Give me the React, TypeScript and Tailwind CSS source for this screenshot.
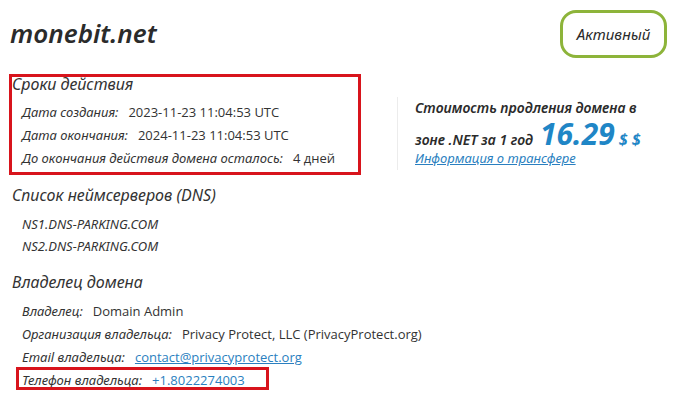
import React from 'react';

const label = "italic text-[#333] font-['Noto_Sans',sans-serif]";
const value = "text-[#333] font-['Open_Sans',sans-serif]";

const Row = ({ name, children }: { name: string; children: React.ReactNode }) => (
  <div className="flex items-center h-[23px] pl-[10px] text-[13px] whitespace-nowrap">
    <span className={label}>{name}</span>
    <span className={`ml-[10px] ${value}`}>{children}</span>
  </div>
);

const Heading = ({ children }: { children: React.ReactNode }) => (
  <h2 className="h-[22px] leading-[22px] text-[16px] italic text-[#333] font-['Noto_Sans',sans-serif]">{children}</h2>
);

const App = () => {
  return (
    <div className="relative w-[687px] h-[393px] bg-white overflow-hidden font-['Noto_Sans',sans-serif]">
      {/* Top: domain + status */}
      <div className="flex justify-between items-start pt-[10px] pl-[10px] pr-[20px]">
        <h1 className="mt-[6px] text-[26px] leading-[34px] font-semibold italic text-[#2b2b2b]">monebit.net</h1>
        <div className="w-[107px] h-[48px] border-[3px] border-[#8db43a] rounded-[16px] flex items-center justify-center text-[15px] italic text-[#2b2b2b]">
          Активный
        </div>
      </div>

      <div className="flex">
        {/* Left column */}
        <div className="w-[397px] shrink-0 pl-[12px] pt-[15px]">
          <Heading>Сроки действия</Heading>
          <div className="mt-[6px]">
            <Row name="Дата создания:">2023-11-23 11:04:53 UTC</Row>
            <Row name="Дата окончания:">2024-11-23 11:04:53 UTC</Row>
            <Row name="До окончания действия домена осталось:">4 дней</Row>
          </div>

          <div className="mt-[14px]">
            <Heading>Список неймсерверов (DNS)</Heading>
            <div className="mt-[7px] pl-[10px] text-[13px] italic text-[#333]">
              <div className="h-[22px] leading-[22px]">NS1.DNS-PARKING.COM</div>
              <div className="h-[22px] leading-[22px]">NS2.DNS-PARKING.COM</div>
            </div>
          </div>

          <div className="mt-[14px]">
            <Heading>Владелец домена</Heading>
            <div className="mt-[7px]">
              <Row name="Владелец:">Domain Admin</Row>
              <Row name="Организация владельца:">Privacy Protect, LLC (PrivacyProtect.org)</Row>
              <Row name="Email владельца:">
                <a className="text-[#2a7fc0] underline">contact@privacyprotect.org</a>
              </Row>
              <Row name="Телефон владельца:">
                <a className="text-[#2a7fc0]">+1.8022274003</a>
              </Row>
            </div>
          </div>
        </div>

        {/* Renewal price */}
        <div className="mt-[39px] h-[73px] border-l border-[#ececec] pl-[17px] flex flex-col">
          <div className="h-[22px] text-[14px] leading-[22px] font-semibold italic text-[#2b2b2b]">Стоимость продления домена в</div>
          <div className="flex items-baseline h-[30px] leading-[30px] text-[14px] font-semibold italic text-[#2b2b2b]">
            <span>зоне .NET за 1 год</span>
            <span className="ml-[7px] text-[30px] leading-[30px] font-bold text-[#1f86c6]">16.29</span>
            <span className="ml-[4px] text-[16px] font-bold text-[#1f86c6]">$ $</span>
          </div>
          <a className="text-[13px] leading-[18px] italic text-[#2a7fc0] underline">Информация о трансфере</a>
        </div>
      </div>

      {/* Annotation boxes */}
      <div className="absolute left-[9px] top-[74px] w-[352px] h-[101px] border-[3px] border-[#d8141c]" />
      <div className="absolute left-[16px] top-[367px] w-[253px] h-[23px] border-[3px] border-[#d8141c]" />
    </div>
  );
};

export default App;
